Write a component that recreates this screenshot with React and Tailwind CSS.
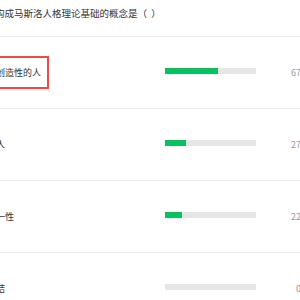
import React from "react";

const options = [
  { label: "自我实现的创造性的人", count: 67, picked: true },
  { label: "自我实现的人", count: 27 },
  { label: "人格完整统一性", count: 22 },
  { label: "人与人的联结", count: 0 },
];

const total = options.reduce((s, o) => s + o.count, 0);

const App = () => {
  return (
    <div
      className="w-[365px] -ml-[49px] pr-[6px] bg-white text-[#333] overflow-hidden"
      style={{ fontFamily: '"Noto Sans CJK SC", "Noto Sans", sans-serif' }}
    >
      <div className="h-[36px] pt-[8px] pl-[44px] text-[9.5px] leading-[10px] whitespace-nowrap">
        构成马斯洛人格理论基础的概念是（&nbsp;&nbsp;）
      </div>

      {options.map((o) => (
        <div
          key={o.label}
          className="h-[72px] flex items-center border-t border-[#ececec]"
        >
          <div className="w-[214px] shrink-0 text-[9px] leading-[11px] whitespace-nowrap">
            {o.picked ? (
              <span className="inline-block -ml-[10px] pl-[8px] pr-[6px] py-[9px] border-2 border-[#f34848]">
                {o.label}
              </span>
            ) : (
              <span className="inline-block">{o.label}</span>
            )}
          </div>
          <div className="w-[91px] h-[6px] mb-[3px] bg-[#e6e6e6] shrink-0">
            <div
              className="h-full bg-[#07c160]"
              style={{ width: `${(o.count / total) * 100}%` }}
            />
          </div>
          <div className="flex-1 text-right text-[9px] leading-[11px] text-[#9a9a9a] whitespace-nowrap">
            {o.count}票
          </div>
        </div>
      ))}
    </div>
  );
};

export default App;
